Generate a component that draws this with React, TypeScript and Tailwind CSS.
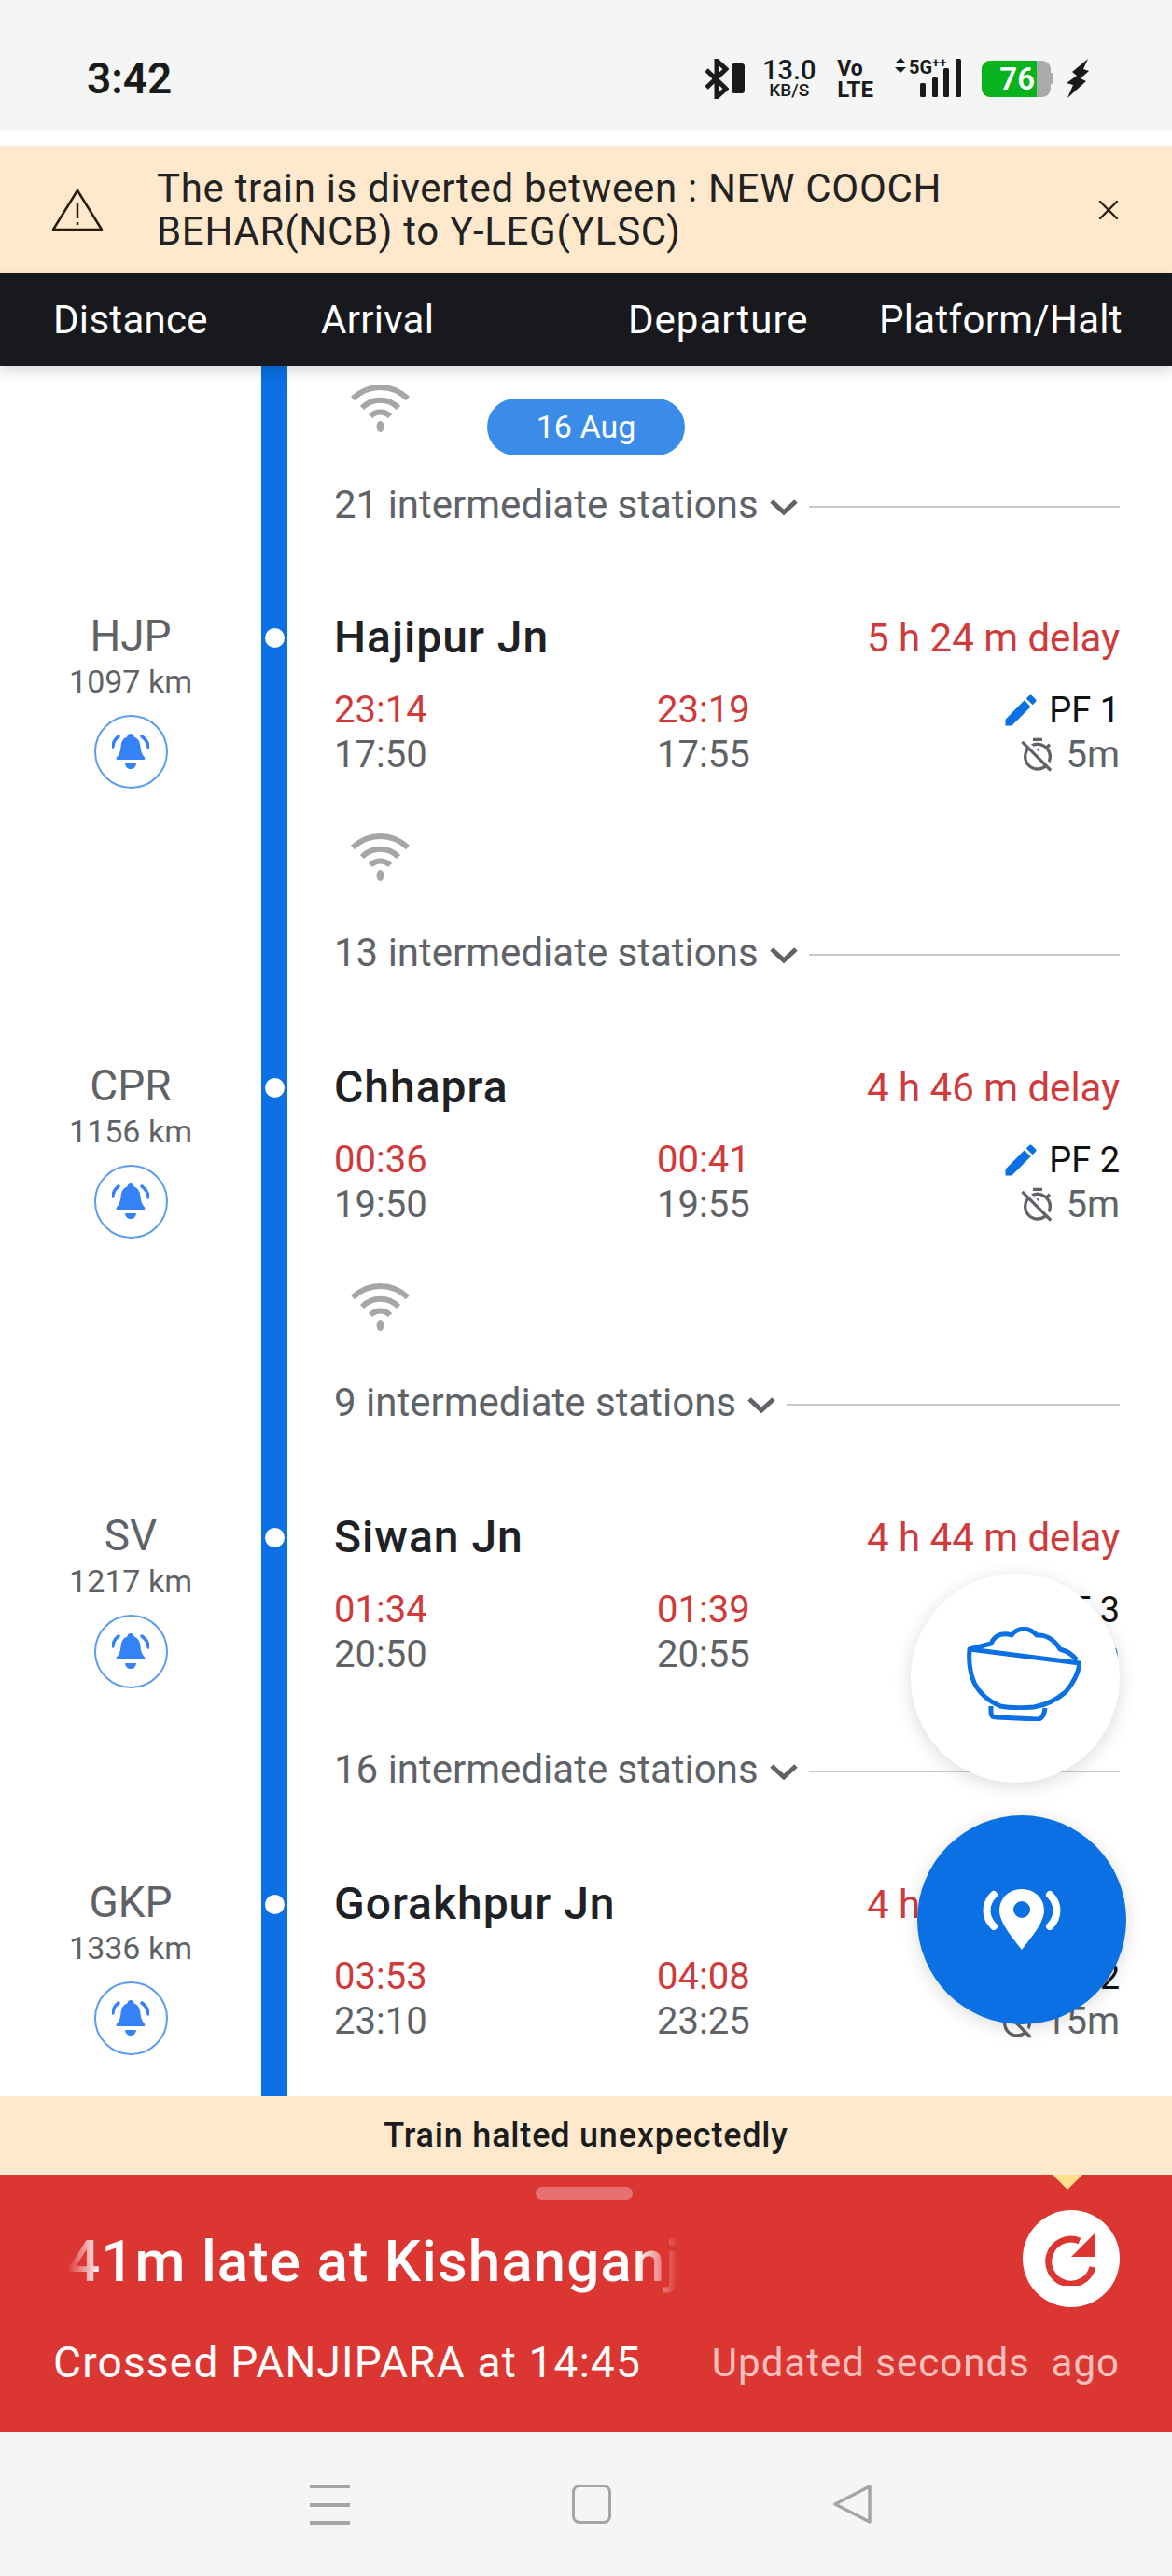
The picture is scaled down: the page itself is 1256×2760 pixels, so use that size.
import { X } from "lucide-react";
import { MdEdit, MdOutlineTimerOff } from "react-icons/md";

const font = "font-['Roboto',sans-serif]";

interface Stop {
  code: string;
  km: string;
  name: string;
  delay: string;
  arrAct: string;
  arrSch: string;
  depAct: string;
  depSch: string;
  pf: string;
  halt: string;
  wifi: boolean;
  count: number;
}

const stops: Stop[] = [
  { code: "HJP", km: "1097 km", name: "Hajipur Jn", delay: "5 h 24 m delay", arrAct: "23:14", arrSch: "17:50", depAct: "23:19", depSch: "17:55", pf: "PF 1", halt: "5m", wifi: true, count: 13 },
  { code: "CPR", km: "1156 km", name: "Chhapra", delay: "4 h 46 m delay", arrAct: "00:36", arrSch: "19:50", depAct: "00:41", depSch: "19:55", pf: "PF 2", halt: "5m", wifi: true, count: 9 },
  { code: "SV", km: "1217 km", name: "Siwan Jn", delay: "4 h 44 m delay", arrAct: "01:34", arrSch: "20:50", depAct: "01:39", depSch: "20:55", pf: "PF 3", halt: "5m", wifi: false, count: 16 },
  { code: "GKP", km: "1336 km", name: "Gorakhpur Jn", delay: "4 h 43 m delay", arrAct: "03:53", arrSch: "23:10", depAct: "04:08", depSch: "23:25", pf: "PF 2", halt: "15m", wifi: false, count: 0 },
];

function WifiIcon() {
  return (
    <svg width="65" height="52" viewBox="0 0 65 52" fill="none" stroke="#a6a6a6" strokeWidth="6">
      <path d="M3 15C20 -1 45 -1 62 15" />
      <path d="M13 25C24 14 41 14 52 25" />
      <path d="M22 34C28 28 37 28 43 34" />
      <ellipse cx="32.5" cy="45" rx="4" ry="6" fill="#a6a6a6" stroke="none" />
    </svg>
  );
}

function BellButton() {
  return (
    <div className="w-[79px] h-[79px] rounded-full border-2 border-[#5d9df0] flex items-center justify-center">
      <svg width="40" height="40" viewBox="0 0 40 40" fill="#3482f6">
        <path d="M20 0c2 0 3.500 1.500 3.600 3.500C28.500 5 30 9 30.500 14c.4 5 1.500 8 4.500 11.500.8 1 .5 2.500-1 2.500H6c-1.500 0-1.800-1.500-1-2.500C8 22 9.100 19 9.500 14 10 9 11.500 5 16.400 3.500 16.500 1.500 18 0 20 0z" />
        <path d="M14 32h12c-.5 4-3 6-6 6s-5.500-2-6-6z" />
        <path d="M7 3C3 6 1 10 1 14M32 3C36 6 39 11 39 15" fill="none" stroke="#3482f6" strokeWidth="3.500" strokeLinecap="round" />
      </svg>
    </div>
  );
}

function Intermediate({ count }: { count: number }) {
  return (
    <div className="flex items-center h-[60px]">
      <span className="text-[42px] leading-[60px] text-[#5f6368] whitespace-nowrap">{count} intermediate stations</span>
      <svg className="ml-[12px] mt-[4px] shrink-0" width="30" height="18" viewBox="0 0 30 18" fill="none" stroke="#5f6368" strokeWidth="5">
        <path d="M2 3l13 12L28 3" />
      </svg>
      <div className="flex-1 h-[2px] bg-[#c5c7cc] ml-[12px] mt-[4px]" />
    </div>
  );
}

function StopRow({ stop }: { stop: Stop }) {
  return (
    <div className="flex">
      <div className="w-[280px] shrink-0 flex flex-col items-center">
        <div className="text-[46px] leading-[56px] mt-[10px] text-[#5f6368]">{stop.code}</div>
        <div className="text-[34px] leading-[40px] mt-[1px] text-[#5f6368]">{stop.km}</div>
        <div className="mt-[16px]">
          <BellButton />
        </div>
      </div>
      <div className="w-[28px] shrink-0 bg-[#0a70e4] flex justify-center">
        <div className="w-[21px] h-[21px] rounded-full bg-white mt-[30px]" />
      </div>
      <div className="flex-1 pl-[50px] pr-[56px]">
        <div className="flex items-center justify-between h-[80px]">
          <span className="text-[48px] tracking-[1px] font-medium text-[#202124]">{stop.name}</span>
          <span className="text-[42px] text-[#d03a3a]">{stop.delay}</span>
        </div>
        <div className="flex mt-[14px] text-[40px] leading-[48px]">
          <div className="w-[346px] shrink-0">
            <div className="text-[#d03a3a]">{stop.arrAct}</div>
            <div className="text-[#5f6368]">{stop.arrSch}</div>
          </div>
          <div className="w-[200px] shrink-0">
            <div className="text-[#d03a3a]">{stop.depAct}</div>
            <div className="text-[#5f6368]">{stop.depSch}</div>
          </div>
          <div className="flex-1 flex flex-col items-end">
            <div className="flex items-center text-[38px] text-[#111]">
              <MdEdit className="text-[#0a70e4] w-[44px] h-[44px] mr-[8px]" />
              {stop.pf}
            </div>
            <div className="flex items-center text-[#5f6368]">
              <MdOutlineTimerOff className="w-[40px] h-[40px] mr-[10px]" />
              {stop.halt}
            </div>
          </div>
        </div>
        {stop.wifi && (
          <div className="ml-[17px] mt-[60px]">
            <WifiIcon />
          </div>
        )}
        {stop.count > 0 && (
          <div className={stop.wifi ? "mt-[46px] mb-[74px]" : "mt-[69px] mb-[74px]"}>
            <Intermediate count={stop.count} />
          </div>
        )}
      </div>
    </div>
  );
}

function StatusBar() {
  return (
    <div className="h-[140px] shrink-0 bg-[#f4f6f5] flex items-center pt-[28px] text-[#1a1a1a]">
      <span className="ml-[93px] text-[46px] font-semibold">3:42</span>
      <div className="ml-auto mr-[89px] flex items-center">
        <svg width="26" height="43" viewBox="0 0 26 43" fill="none" stroke="#1a1a1a" strokeWidth="5">
          <path d="M2 12l21 20-10 9V2l10 9L2 31" />
        </svg>
        <div className="w-[14px] h-[32px] ml-[3px] rounded-[3px] bg-[#1a1a1a]" />
        <div className="ml-[17px] w-[61px] flex flex-col items-center">
          <span className="text-[29px] leading-[26px] font-medium">13.0</span>
          <span className="text-[19px] leading-[18px] font-medium">KB/S</span>
        </div>
        <div className="ml-[21px] flex flex-col items-start">
          <span className="text-[23px] leading-[23px] font-bold">Vo</span>
          <span className="text-[24px] leading-[22px] font-bold">LTE</span>
        </div>
        <div className="relative ml-[23px] w-[72px] h-[44px]">
          <svg width="72" height="44" viewBox="0 0 72 44" fill="#1a1a1a">
            <path d="M6 0l6 6H0zM6 16l6-6H0z" />
            <rect x="27" y="27" width="6" height="15" rx="1.500" />
            <rect x="40" y="21" width="6" height="21" rx="1.500" />
            <rect x="52" y="11" width="6" height="31" rx="1.500" />
            <rect x="65" y="1" width="6" height="41" rx="1.500" />
          </svg>
          <span className="absolute left-[15px] top-0 text-[20px] leading-[20px] font-bold">5G</span>
          <span className="absolute left-[40px] top-[-2px] text-[14px] leading-[14px] font-bold">++</span>
        </div>
        <div className="ml-[21px] flex items-center">
          <div className="w-[74px] h-[39px] rounded-[9px] overflow-hidden flex bg-[#aaaaaa]">
            <div className="w-[59px] bg-[#09b31d] text-white text-[33px] leading-[39px] font-semibold text-right pr-[2px]">76</div>
          </div>
          <div className="w-[3px] h-[12px] bg-[#aaaaaa] rounded-r-[2px]" />
        </div>
        <svg className="ml-[14px]" width="24" height="42" viewBox="0 0 24 42" fill="#1a1a1a">
          <path d="M23 0L6 14l5 4-11 8 7 2-6 14 20-18-6-3 9-8-6-2z" />
        </svg>
      </div>
    </div>
  );
}

export default function App() {
  return (
    <div className={`${font} relative w-[1256px] h-[2760px] overflow-hidden bg-white flex flex-col`}>
      <StatusBar />
      <div className="h-[16px] shrink-0 bg-white" />
      <div className="h-[137px] shrink-0 bg-[#ffe9cc] flex items-center">
        <svg className="ml-[55px] shrink-0" width="56" height="48" viewBox="0 0 56 48" fill="none" stroke="#2a1c0c" strokeWidth="2.500" strokeLinejoin="round">
          <path d="M28 3L54 45H2z" />
          <path d="M28 17v16M28 37v3" />
        </svg>
        <div className="ml-[57px] w-[900px] pt-[1px] text-[42px] tracking-[0.7px] leading-[46px] text-[#222]">
          The train is diverted between : NEW COOCH BEHAR(NCB) to Y-LEG(YLSC)
        </div>
        <X className="ml-auto mr-[50px] w-[36px] h-[36px] text-[#2a1c0c]" strokeWidth={1.500} />
      </div>
      <div className="relative z-10 h-[99px] shrink-0 bg-[#18191d] shadow-[0_6px_14px_rgba(0,0,0,0.15)] flex items-center text-white text-[42px] tracking-[0.3px] pl-[57px]">
        <span className="w-[287px]">Distance</span>
        <span className="w-[329px]">Arrival</span>
        <span className="w-[269px] tracking-[1px]">Departure</span>
        <span>Platform/Halt</span>
      </div>

      <div className="h-[1854px] shrink-0 overflow-hidden">
        <div className="flex">
          <div className="w-[280px] shrink-0" />
          <div className="w-[28px] shrink-0 bg-[#0a70e4]" />
          <div className="flex-1 pl-[50px] pr-[56px]">
            <div className="flex pt-[20px]">
              <div className="ml-[17px]">
                <WifiIcon />
              </div>
              <div className="ml-[82px] mt-[15px] w-[212px] h-[61px] rounded-full bg-[#3b8ce8] text-white text-[34px] flex items-center justify-center">
                16 Aug
              </div>
            </div>
            <div className="mt-[23px] mb-[72px]">
              <Intermediate count={21} />
            </div>
          </div>
        </div>
        {stops.map((s) => (
          <StopRow key={s.code} stop={s} />
        ))}
        <div className="flex h-[200px]">
          <div className="w-[280px] shrink-0" />
          <div className="w-[28px] shrink-0 bg-[#0a70e4]" />
        </div>
      </div>

      <div className="h-[84px] shrink-0 bg-[#fee9cc] flex items-center justify-center text-[36px] tracking-[0.8px] font-medium text-[#1c1c1c]">
        Train halted unexpectedly
      </div>
      <div className="relative h-[276px] shrink-0 bg-[#dc3633]">
        <div className="absolute left-[574px] top-[13px] w-[104px] h-[14px] rounded-full bg-[#e87070]" />
        <div className="absolute left-[1128px] top-0 w-0 h-0 border-l-[16px] border-r-[16px] border-t-[16px] border-l-transparent border-r-transparent border-t-[#ffdf8a]" />
        <div className="flex items-center justify-between pl-[72px] pr-[56px] pt-[38px] h-[142px]">
          <span className="w-[660px] mt-[6px] text-[62px] tracking-[1px] font-medium leading-[72px] text-white whitespace-nowrap overflow-hidden [mask-image:linear-gradient(90deg,transparent_0,#000_36px,#000_610px,transparent_654px)]">
            41m late at Kishanganj
          </span>
          <div className="w-[104px] h-[104px] rounded-full bg-white flex items-center justify-center">
            <svg width="58" height="58" viewBox="0 0 58 58" fill="none">
              <path d="M52 38A24 24 0 1 1 38 10" stroke="#dc3633" strokeWidth="7" />
              <path d="M55 1V27H29z" fill="#dc3633" />
            </svg>
          </div>
        </div>
        <div className="flex items-center justify-between pl-[57px] pr-[56px] mt-[25px]">
          <span className="text-[46px] tracking-[1.2px] text-white whitespace-nowrap">Crossed PANJIPARA at 14:45</span>
          <span className="text-[42px] tracking-[1px] text-[#f9c0bd] whitespace-pre">Updated seconds  ago</span>
        </div>
      </div>
      <div className="flex-1 bg-[#f4f6f5] flex items-start pt-[56px] pl-[332px]">
        <div className="w-[43px] h-[43px] flex flex-col justify-between">
          <div className="h-[4px] bg-[#a5a5a5]" />
          <div className="h-[4px] bg-[#a5a5a5]" />
          <div className="h-[4px] bg-[#a5a5a5]" />
        </div>
        <div className="ml-[238px] w-[42px] h-[42px] rounded-[8px] border-[3px] border-[#a5a5a5]" />
        <svg className="ml-[237px]" width="42" height="42" viewBox="0 0 42 42" fill="none" stroke="#a5a5a5" strokeWidth="3.500" strokeLinejoin="round">
          <path d="M40 2V40L3 21z" />
        </svg>
      </div>

      <div className="absolute left-[976px] top-[1686px] w-[224px] h-[224px] rounded-full bg-white shadow-[0_4px_20px_rgba(0,0,0,0.14)] flex items-center justify-center">
        <svg className="ml-[18px] mb-[10px]" width="123" height="101" viewBox="0 0 123 101" fill="none" stroke="#0a70e4" strokeWidth="5" strokeLinejoin="round">
          <path d="M3 24L121 39C120 48 116 58 106 70 94 80 84 84 72 86 58 87 46 87 36 85 24 80 14 72 8 60 3 48 2 36 3 24z" />
          <path d="M26 85V92C26 96 29 97 32 97L76 99C80 99 83 96 84 87" />
          <path d="M3 24L26 18C30 8 40 6 48 9 54 1 66 -1 75 9 85 8 94 14 100 24 108 26 114 30 118 36" />
        </svg>
      </div>
      <div className="absolute left-[983px] top-[1945px] w-[224px] h-[224px] rounded-full bg-[#0a70e4] shadow-[0_4px_20px_rgba(0,0,0,0.14)] flex items-center justify-center">
        <svg width="84" height="66" viewBox="0 0 84 66" fill="none">
          <path fillRule="evenodd" clipRule="evenodd" d="M42 0C56 0 66 10 66 23 66 36 52 52 42 65 32 52 18 36 18 23 18 10 28 0 42 0zM42 13a9 9 0 1 0 0 18 9 9 0 0 0 0-18z" fill="#fff" />
          <path d="M12 6C2 16 2 30 12 40M72 6C82 16 82 30 72 40" stroke="#fff" strokeWidth="8" strokeLinecap="round" />
        </svg>
      </div>
    </div>
  );
}
